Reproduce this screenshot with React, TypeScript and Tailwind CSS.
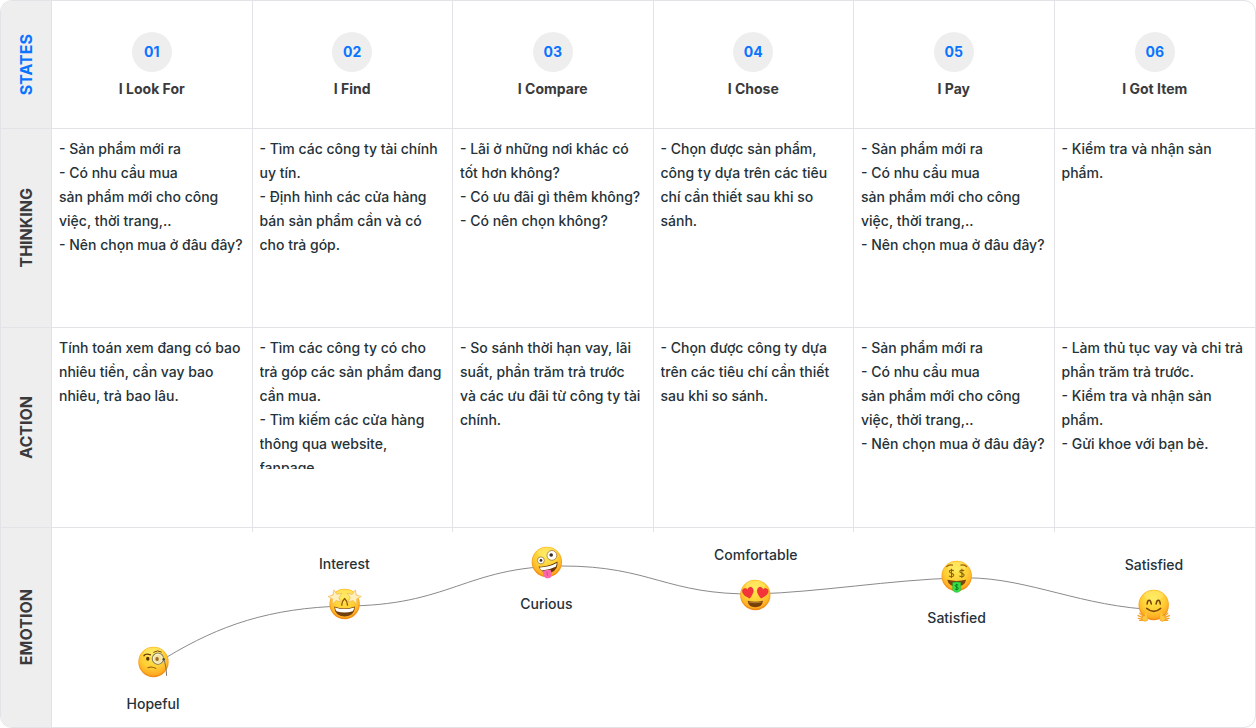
import type { ReactNode } from "react";

type Stage = { id: string; title: string; thinking: string; action: string };

const buying = "- Sản phẩm mới ra\n- Có nhu cầu mua\nsản phẩm mới cho công\nviệc, thời trang,..\n- Nên chọn mua ở đâu đây?";

const stages: Stage[] = [
  {
    id: "01",
    title: "I Look For",
    thinking: buying,
    action: "Tính toán xem đang có bao\nnhiêu tiền, cần vay bao\nnhiêu, trả bao lâu.",
  },
  {
    id: "02",
    title: "I Find",
    thinking: "- Tìm các công ty tài chính\nuy tín.\n- Định hình các cửa hàng\nbán sản phẩm cần và có\ncho trả góp.",
    action:
      "- Tìm các công ty có cho\ntrả góp các sản phẩm đang\ncần mua.\n- Tìm kiếm các cửa hàng\nthông qua website,\nfanpage",
  },
  {
    id: "03",
    title: "I Compare",
    thinking: "- Lãi ở những nơi khác có\ntốt hơn không?\n- Có ưu đãi gì thêm không?\n- Có nên chọn không?",
    action: "- So sánh thời hạn vay, lãi\nsuất, phần trăm trả trước\nvà các ưu đãi từ công ty tài\nchính.",
  },
  {
    id: "04",
    title: "I Chose",
    thinking: "- Chọn được sản phẩm,\ncông ty dựa trên các tiêu\nchí cần thiết sau khi so\nsánh.",
    action: "- Chọn được công ty dựa\ntrên các tiêu chí cần thiết\nsau khi so sánh.",
  },
  { id: "05", title: "I Pay", thinking: buying, action: buying },
  {
    id: "06",
    title: "I Got Item",
    thinking: "- Kiểm tra và nhận sản\nphẩm.",
    action: "- Làm thủ tục vay và chi trả\nphần trăm trả trước.\n- Kiểm tra và nhận sản\nphẩm.\n- Gửi khoe với bạn bè.",
  },
];

function Emoji({ children }: { children?: ReactNode }) {
  return (
    <svg viewBox="0 0 36 36" className="block size-9 overflow-visible" aria-hidden="true">
      <circle cx="18" cy="18" r="15.2" fill="url(#faceEdge)" />
      <circle cx="18" cy="17.5" r="14.3" fill="url(#face)" />
      <ellipse cx="18" cy="8.6" rx="9.6" ry="4.8" fill="#fff685" opacity=".4" />
      {children}
    </svg>
  );
}

function Monocle() {
  return (
    <Emoji>
      <path d="M8.4 11.8q1.6-2.6 6.6-1" fill="none" stroke="#6b3b06" strokeWidth="1.3" strokeLinecap="round" />
      <ellipse cx="12.3" cy="14.8" rx="1.7" ry="2" fill="#5c3205" />
      <circle cx="22.4" cy="14.7" r="5.6" fill="#f3e2a0" stroke="#8c8566" strokeWidth="1.2" />
      <circle cx="22.4" cy="14.7" r="4.5" fill="none" stroke="#fff9d8" strokeWidth=".9" />
      <ellipse cx="21.6" cy="15" rx="1.7" ry="2.1" fill="#9b6c26" />
      <path d="M18.2 8.2q4-2.8 7.8-.2" fill="none" stroke="#7c4a0c" strokeWidth="1" strokeLinecap="round" />
      <path d="M28 14.8q2.7 6 3.1 17" fill="none" stroke="#77736a" strokeWidth="1" />
      <circle cx="28.2" cy="15.2" r="1.2" fill="#4a4335" />
      <path d="M12.5 23.7q3.8-1.8 7.8.7" fill="none" stroke="#945407" strokeWidth="1.1" strokeLinecap="round" />
    </Emoji>
  );
}

const star = "M0-7.2 2-2.3 7.2-2 3.2 1.4 4.5 6.5 0 3.7-4.5 6.5-3.2 1.4-7.2-2-2-2.3Z";

function StarStruck() {
  return (
    <Emoji>
      <path d="M7.6 20.5Q18 24.5 28.4 20.5 27.8 30.4 18 30.4T7.6 20.5Z" fill="#703f0b" />
      <path d="M8.4 21.4Q18 24.7 27.6 21.4q-.5 2.7-1.6 3.8Q18 27.6 10 25.2q-1.2-1.2-1.6-3.8Z" fill="#fff" />
      <path d="M15 19.6q.2-4.4 3-7 2.8 2.6 3 7" fill="none" stroke="#8f5208" strokeWidth="1.3" />
      <path d={star} transform="translate(8.8 10.9) rotate(-12)" fill="#fff0bd" stroke="#efb24a" strokeWidth=".6" />
      <path d={star} transform="translate(27.2 10.9) rotate(12)" fill="#fff0bd" stroke="#efb24a" strokeWidth=".6" />
    </Emoji>
  );
}

function Zany() {
  return (
    <Emoji>
      <circle cx="23" cy="11.4" r="4.9" fill="#fff" stroke="#aa834a" strokeWidth=".9" />
      <circle cx="22.3" cy="11" r="1.8" fill="#3a2a25" />
      <circle cx="12" cy="16.4" r="3.5" fill="#fff" stroke="#aa834a" strokeWidth=".9" />
      <circle cx="12.1" cy="16.4" r="1.4" fill="#3a2a25" />
      <path d="M9.6 22.6Q19 23.3 28.5 17.6 29.7 25.8 22 28.7 13.7 31 9.6 22.6Z" fill="#693508" />
      <path d="M10.7 23.4q9.2 0 17.1-4.4 0 2.2-1 3.8-7 3.6-13.8 3.6-1.5-1.2-2.3-3Z" fill="#fff" />
      <path d="M13.6 27.4q4-2.5 8.5-1.1l.6 4.4q.1 3.1-3.4 3.5-3.7.2-4.5-2.8Z" fill="#fb68ad" />
      <path d="m18 27.8.7 3.7" stroke="#d93d86" strokeWidth=".8" strokeLinecap="round" />
    </Emoji>
  );
}

const heart = "M0 5.7Q-5.5 1.6-5.5-1.8-5.4-5-2.7-5-.8-5 0-2.9.8-5 2.7-5 5.4-5 5.5-1.8 5.5 1.6 0 5.7Z";

function HeartEyes() {
  return (
    <Emoji>
      <path d={heart} transform="translate(11 15.7) rotate(-14)" fill="#f4333b" stroke="#d3262f" strokeWidth=".4" />
      <path d={heart} transform="translate(25 15.7) rotate(14)" fill="#f4333b" stroke="#d3262f" strokeWidth=".4" />
      <path d="M10.3 23.7q7.7 2.1 15.4 0-.9 6.5-7.7 6.5t-7.7-6.5Z" fill="#784007" />
      <path d="M11.6 25.1q6.4 1.4 12.8 0" fill="none" stroke="#b98b43" strokeWidth=".8" />
    </Emoji>
  );
}

const dollar = "M2.3-2.5C1.8-3.6-2.2-3.9-2.2-1.8-2.2.2 2.4-.3 2.4 1.9 2.4 4-1.8 4-2.5 2.5M0-4.7V4.9";

function MoneyMouth() {
  return (
    <Emoji>
      <path d="M8 8.6q2.5-2.6 5.8-1.5M22.2 7.1Q25.5 6 28 8.6" fill="none" stroke="#9b6107" strokeWidth="1.2" strokeLinecap="round" />
      <path d={dollar} transform="translate(12.8 15.3) scale(.95)" fill="none" stroke="#8a6410" strokeWidth="1.1" />
      <path d={dollar} transform="translate(23.2 15.3) scale(.95)" fill="none" stroke="#8a6410" strokeWidth="1.1" />
      <path d="M8.6 21.8q9.4 2.3 18.8 0-1.2 6.6-9.4 6.6t-9.4-6.6Z" fill="#7d430a" />
      <path d="M14 24.6q4-1.4 8 0V32q-1.1 2.4-4 2.4T14 32Z" fill="#35e14a" stroke="#17b52b" strokeWidth=".5" />
      <path d={dollar} transform="translate(18 29) scale(.7)" fill="none" stroke="#087b18" strokeWidth="1.3" />
    </Emoji>
  );
}

function Hand() {
  return (
    <>
      <path
        d="M9 30.5 4 26.2m4.2 4.8-5.8-2.4m5.4 3.6-5.2-.8M8.2 33.2l-4.2.2"
        fill="none"
        stroke="#f5a127"
        strokeWidth="1.4"
        strokeLinecap="round"
      />
      <ellipse cx="9.3" cy="31.3" rx="3" ry="3" fill="#ffc73e" stroke="#e98d14" strokeWidth=".5" />
      <path d="m10.6 29.2-.4-2.4" stroke="#ffc73e" strokeWidth="2" strokeLinecap="round" />
    </>
  );
}

function Hugging() {
  return (
    <Emoji>
      <path d="M11.4 17q.4-3.8 2-3.8t2.2 3.8M20.4 17q.6-3.8 2.2-3.8t2 3.8" fill="none" stroke="#75410a" strokeWidth="1.5" strokeLinecap="round" />
      <path d="M11 21.4Q18 27.4 25 21.4" fill="none" stroke="#824708" strokeWidth="1.5" strokeLinecap="round" />
      <Hand />
      <g transform="translate(36 0) scale(-1 1)">
        <Hand />
      </g>
    </Emoji>
  );
}

function RowHead({ children, blue }: { children: ReactNode; blue?: boolean }) {
  return (
    <th scope="row" className="border-r border-b border-[#e2e2e7] bg-[#eeeeee] p-0 group-last:border-b-0">
      <div className="flex items-center justify-center">
        <span className={`rotate-180 text-base leading-6 font-bold whitespace-nowrap [writing-mode:vertical-rl] ${blue ? "text-[#0a74ff]" : "text-[#3a3a3c]"}`}>
          {children}
        </span>
      </div>
    </th>
  );
}

function TextCell({ children }: { children: string }) {
  return (
    <td className="border-r border-b border-[#e2e2e7] p-0 pt-2 pl-[7px] align-top last:border-r-0">
      <p className="max-h-[133px] overflow-hidden text-sm leading-6 font-medium whitespace-pre text-[#263238]">{children}</p>
    </td>
  );
}

function Marker({ place, label, above, face }: { place: string; label: string; above?: boolean; face: ReactNode }) {
  return (
    <figure className={`absolute flex -translate-x-1/2 items-center ${above ? "flex-col-reverse gap-2.5" : "flex-col gap-3"} ${place}`}>
      {face}
      <figcaption className="text-sm leading-6 font-medium text-[#263238]">{label}</figcaption>
    </figure>
  );
}

export default function App() {
  return (
    <main className="overflow-hidden rounded-xl border border-[#e2e2e7] bg-white font-['Inter',sans-serif]">
      <svg className="absolute size-0" aria-hidden="true">
        <defs>
          <radialGradient id="face" cx=".48" cy=".32" r=".7">
            <stop offset="0" stopColor="#ffe84f" />
            <stop offset=".55" stopColor="#ffd036" />
            <stop offset="1" stopColor="#ffa21c" />
          </radialGradient>
          <linearGradient id="faceEdge" x1="0" y1="0" x2="0" y2="1">
            <stop offset="0" stopColor="#fcb92c" />
            <stop offset="1" stopColor="#f08a14" />
          </linearGradient>
        </defs>
      </svg>
      <table className="w-full min-w-[1200px] table-fixed border-separate border-spacing-0">
        <colgroup>
          <col className="w-[51px]" />
          {stages.map((s) => (
            <col key={s.id} />
          ))}
        </colgroup>
        <tbody>
          <tr className="group h-32">
            <RowHead blue>STATES</RowHead>
            {stages.map((s) => (
              <th key={s.id} scope="col" className="border-r border-b border-[#e2e2e7] p-0 pt-[31px] align-top last:border-r-0">
                <div className="flex flex-col items-center gap-[7px] text-sm leading-5">
                  <span className="flex size-10 items-center justify-center rounded-full bg-[#eeeeee] font-bold text-[#0a74ff]">{s.id}</span>
                  <span className="font-bold text-[#3a3a3c]">{s.title}</span>
                </div>
              </th>
            ))}
          </tr>
          <tr className="group h-[199px]">
            <RowHead>THINKING</RowHead>
            {stages.map((s) => (
              <TextCell key={s.id}>{s.thinking}</TextCell>
            ))}
          </tr>
          <tr className="group h-[200px]">
            <RowHead>ACTION</RowHead>
            {stages.map((s) => (
              <TextCell key={s.id}>{s.action}</TextCell>
            ))}
          </tr>
          <tr className="group h-[199px]">
            <RowHead>EMOTION</RowHead>
            <td colSpan={6} className="p-0 align-top">
              <div className="relative h-[199px]">
                <div className="grid grid-cols-6">
                  {stages.map((s) => (
                    <span key={s.id} className="h-1 border-r border-[#e2e2e7] last:border-r-0" />
                  ))}
                </div>
                <svg viewBox="52 528 1203 199" preserveAspectRatio="none" className="absolute inset-0 size-full" aria-hidden="true">
                  <path
                    d="M167 657C220 625 270 608 344 606C450 606 465 567 562 566C652 566 665 595 756 594C820 592 890 580 956 578C1020 575 1070 603 1144 609"
                    fill="none"
                    stroke="#8a8a8a"
                    strokeWidth="1"
                    vectorEffect="non-scaling-stroke"
                  />
                </svg>
                <Marker place="left-[8.4%] top-[116px]" label="Hopeful" face={<Monocle />} />
                <Marker place="left-[24.3%] top-[24px]" label="Interest" above face={<StarStruck />} />
                <Marker place="left-[41.1%] top-[16px]" label="Curious" face={<Zany />} />
                <Marker place="left-[58.5%] top-[15px]" label="Comfortable" above face={<HeartEyes />} />
                <Marker place="left-[75.2%] top-[30px]" label="Satisfied" face={<MoneyMouth />} />
                <Marker place="left-[91.6%] top-[25px]" label="Satisfied" above face={<Hugging />} />
              </div>
            </td>
          </tr>
        </tbody>
      </table>
    </main>
  );
}
